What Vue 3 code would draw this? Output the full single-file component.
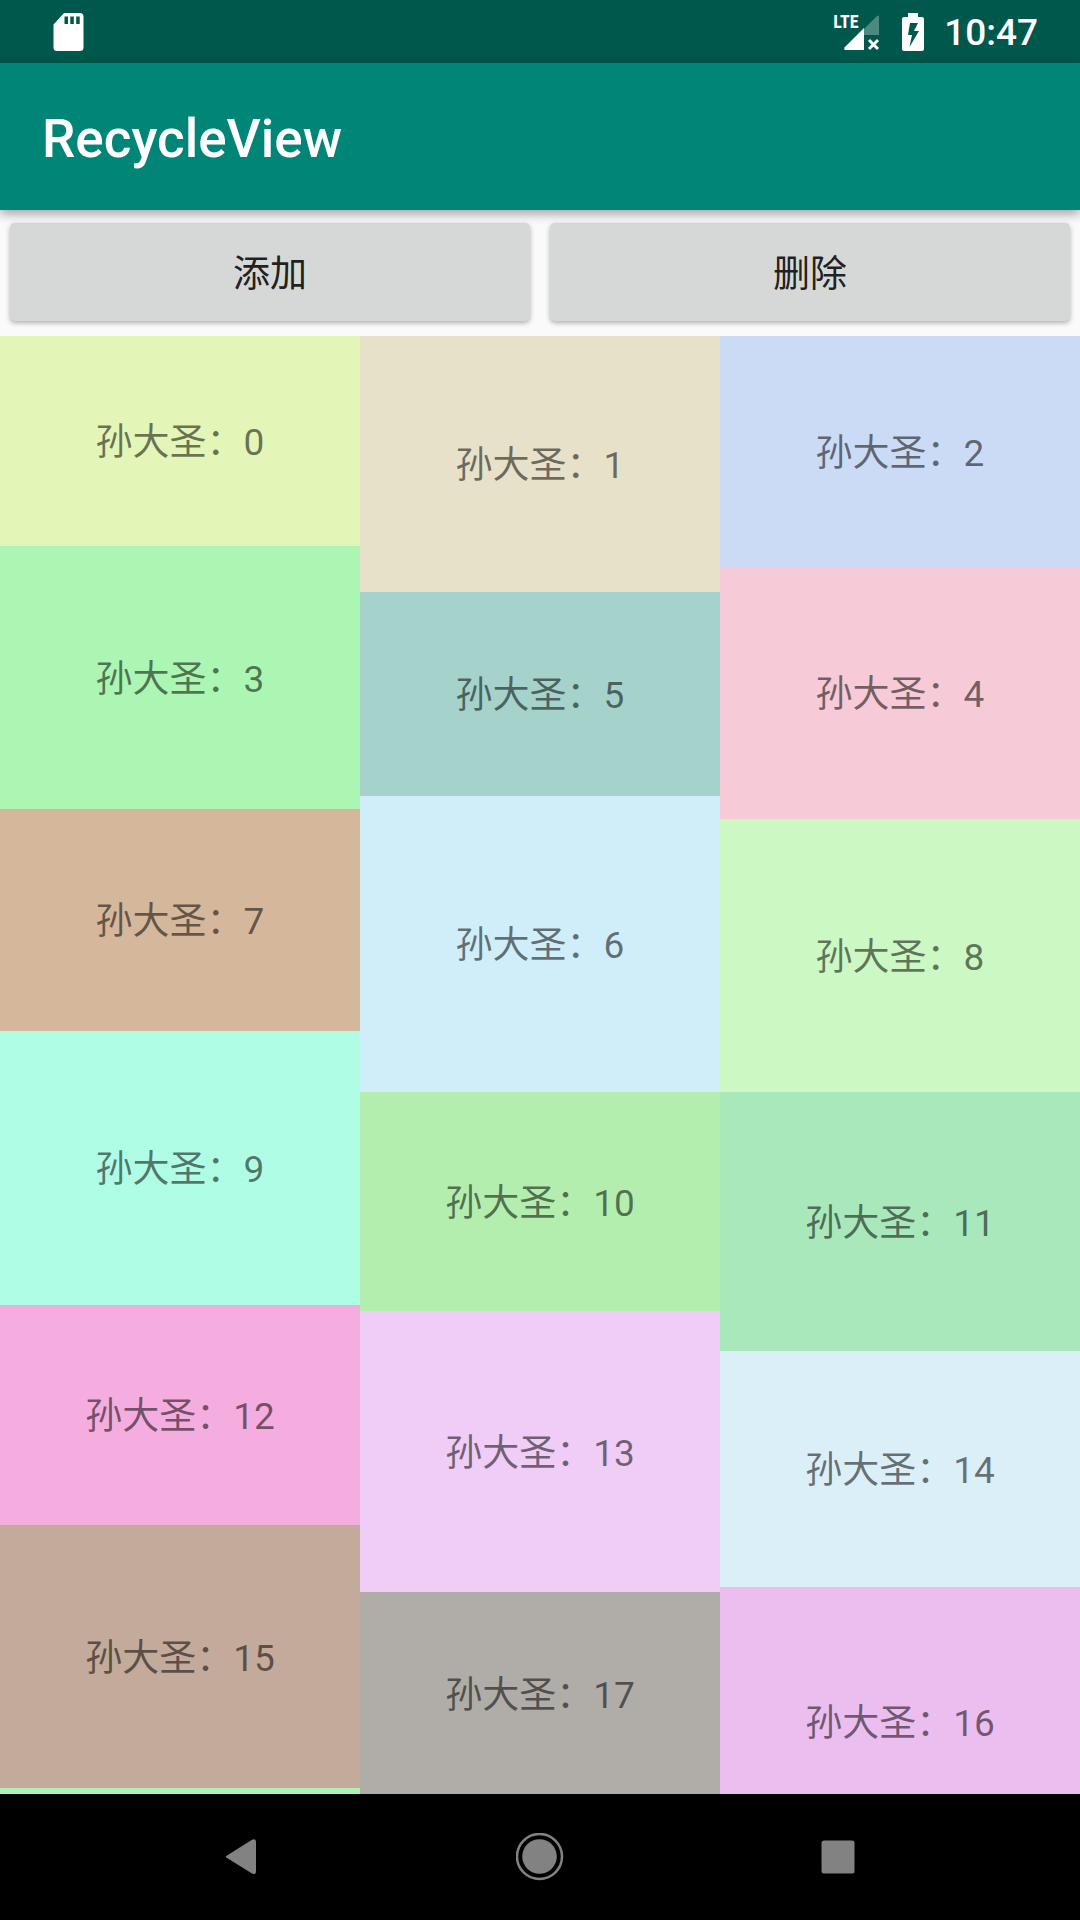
<script setup>
const columns = [
  [
    { label: '孙大圣：0', height: 210, color: '#e3f5b7' },
    { label: '孙大圣：3', height: 263, color: '#acf6b3' },
    { label: '孙大圣：7', height: 222, color: '#d5b89c' },
    { label: '孙大圣：9', height: 274, color: '#affde5' },
    { label: '孙大圣：12', height: 220, color: '#f5ade0' },
    { label: '孙大圣：15', height: 263, color: '#c3aa9a' },
    { label: '', height: 210, color: '#aef2b3' },
  ],
  [
    { label: '孙大圣：1', height: 256, color: '#e7e1c9' },
    { label: '孙大圣：5', height: 204, color: '#a5d3cc' },
    { label: '孙大圣：6', height: 296, color: '#d0eefa' },
    { label: '孙大圣：10', height: 219, color: '#b3eeaf' },
    { label: '孙大圣：13', height: 281, color: '#efcdf6' },
    { label: '孙大圣：17', height: 204, color: '#b0aca8' },
  ],
  [
    { label: '孙大圣：2', height: 231, color: '#ccdbf5' },
    { label: '孙大圣：4', height: 252, color: '#f6cad7' },
    { label: '孙大圣：8', height: 273, color: '#ccf8c3' },
    { label: '孙大圣：11', height: 259, color: '#a8e8bb' },
    { label: '孙大圣：14', height: 236, color: '#dbeff8' },
    { label: '孙大圣：16', height: 270, color: '#ecbeef' },
  ],
]
</script>

<template>
  <div class="screen">
    <div class="status-bar">
      <svg class="sd-card" width="32" height="40" viewBox="0 0 32 40" aria-hidden="true">
        <path
          fill="#fff"
          fill-rule="evenodd"
          d="M12 1H28Q31.500 1 31.500 4.500V35.500Q31.500 39 28 39H5Q1.500 39 1.500 35.500V12.500ZM12.500 4.500V12H16V4.500ZM18.300 4.500V12H21.800V4.500ZM24.200 4.500V12H27.700V4.500Z"
        />
      </svg>
      <div class="status-icons">
        <div class="signal">
          <svg width="48" height="40" viewBox="0 0 48 40" aria-hidden="true">
            <path fill="#fff" fill-opacity="0.3" d="M32 17L45 4Q47 2.500 47 5V23H32Z" />
            <path fill="#fff" d="M32 16V38H13Q11.500 37.500 12.500 35.500Z" />
            <path stroke="#fff" stroke-width="3" d="M37 28L46 37M46 28L37 37" />
          </svg>
          <span class="network">LTE</span>
        </div>
        <svg class="battery" width="22" height="38" viewBox="0 0 22 38" aria-hidden="true">
          <path
            fill="#fff"
            fill-rule="evenodd"
            d="M6 0H16V4H20Q22 4 22 6V36Q22 38 20 38H2Q0 38 0 36V6Q0 4 2 4H6ZM8 10L6 22H10L7.500 34L17 18H12L16 10Z"
          />
        </svg>
        <span class="clock">10:47</span>
      </div>
    </div>

    <header class="app-bar">
      <h1 class="title">RecycleView</h1>
    </header>

    <div class="actions">
      <button class="action" type="button">添加</button>
      <button class="action" type="button">删除</button>
    </div>

    <main class="list">
      <div v-for="(column, index) in columns" :key="index" class="column">
        <div
          v-for="item in column"
          :key="item.label"
          class="item"
          :style="{ height: item.height + 'px', backgroundColor: item.color }"
        >
          {{ item.label }}
        </div>
      </div>
    </main>

    <nav class="nav-bar">
      <button class="nav-button" type="button" aria-label="返回">
        <svg width="48" height="48" viewBox="0 0 48 48" aria-hidden="true">
          <path
            fill="#828282"
            d="M9 22.500L34 6.800Q38 5 38 9V38Q38 42.500 34 40.500L9 25Q6.500 23.700 9 22.500Z"
          />
        </svg>
      </button>
      <button class="nav-button" type="button" aria-label="主屏幕">
        <svg width="48" height="48" viewBox="0 0 48 48" aria-hidden="true">
          <circle cx="23.500" cy="23.500" r="22.500" fill="none" stroke="#828282" stroke-width="2.500" />
          <circle cx="23.500" cy="23.500" r="17.300" fill="#828282" />
        </svg>
      </button>
      <button class="nav-button" type="button" aria-label="最近任务">
        <svg width="48" height="48" viewBox="0 0 48 48" aria-hidden="true">
          <rect x="7.500" y="7.500" width="33" height="33" rx="2.500" fill="#828282" />
        </svg>
      </button>
    </nav>
  </div>
</template>

<style>
body {
  margin: 0;
}
</style>

<style scoped>
.screen {
  display: flex;
  flex-direction: column;
  height: 100vh;
  background: #fafafa;
  font-family: Roboto, "Noto Sans CJK SC", sans-serif;
}

.status-bar {
  display: flex;
  flex: none;
  align-items: center;
  justify-content: space-between;
  height: 63px;
  padding: 0 42px 0 52px;
  background: #00574b;
}

.sd-card,
.battery,
.signal svg,
.nav-button svg {
  display: block;
}

.status-icons {
  display: flex;
  align-items: center;
}

.signal {
  position: relative;
  margin-right: 22px;
}

.network {
  position: absolute;
  top: 0;
  left: 1px;
  color: #fff;
  font-family: "Roboto Condensed", "Open Sans Condensed", "Liberation Sans Narrow", Roboto, sans-serif;
  font-size: 18px;
  font-weight: 700;
  line-height: 20px;
}

.battery {
  margin-right: 20px;
}

.clock {
  padding-top: 2px;
  color: #fff;
  font-size: 37px;
  font-weight: 500;
  line-height: 44px;
}

.app-bar {
  position: relative;
  display: flex;
  box-sizing: border-box;
  flex: none;
  align-items: center;
  height: 147px;
  padding: 4px 42px 0;
  background: #008577;
  box-shadow: 0 4px 10px rgba(0, 0, 0, 0.35);
}

.title {
  margin: 0;
  color: #fff;
  font-size: 53px;
  font-weight: 500;
  line-height: 62px;
}

.actions {
  display: flex;
  flex: none;
  gap: 20px;
  padding: 13px 10px 15px;
}

.action {
  flex: 1;
  height: 98px;
  padding: 6px 0 0;
  border: 0;
  border-radius: 5px;
  background: #d6d7d7;
  box-shadow: 0 2px 5px rgba(0, 0, 0, 0.3);
  color: rgba(0, 0, 0, 0.87);
  font-family: inherit;
  font-size: 37px;
  line-height: 44px;
}

.list {
  display: flex;
  flex: 1;
  min-height: 0;
  overflow: hidden;
}

.column {
  flex: 1;
}

.item {
  display: flex;
  box-sizing: border-box;
  align-items: center;
  justify-content: center;
  padding-top: 4px;
  color: rgba(0, 0, 0, 0.54);
  font-size: 37px;
  line-height: 44px;
}

.nav-bar {
  display: flex;
  flex: none;
  justify-content: center;
  height: 126px;
  background: #000;
}

.nav-button {
  display: flex;
  flex: 0 1 298px;
  align-items: center;
  justify-content: center;
  padding: 0;
  border: 0;
  background: none;
}
</style>
